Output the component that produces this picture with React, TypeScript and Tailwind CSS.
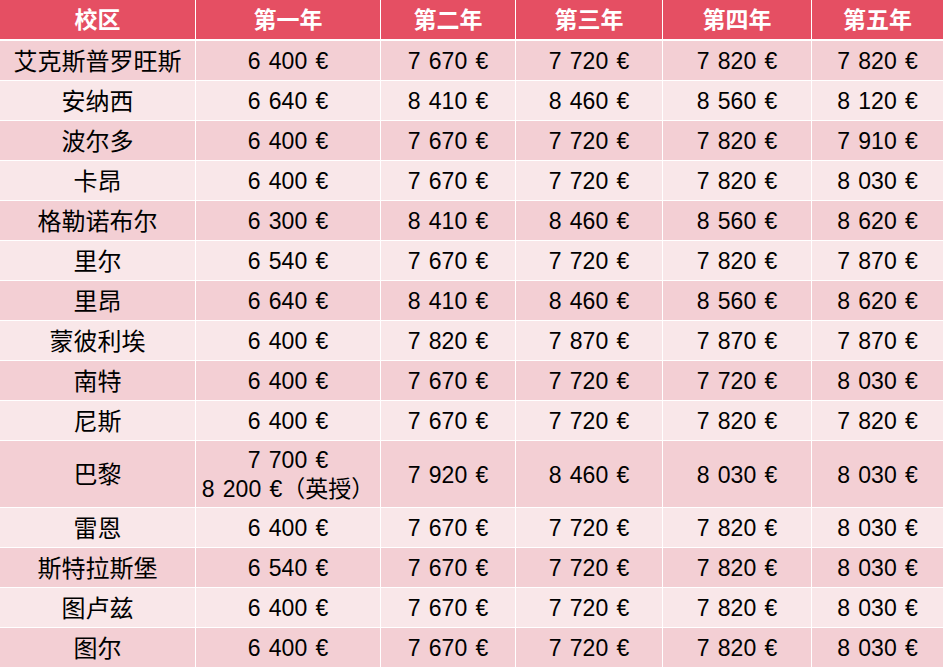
const headers = ['校区', '第一年', '第二年', '第三年', '第四年', '第五年'];

const rows: string[][] = [
  ['艾克斯普罗旺斯', '6 400 €', '7 670 €', '7 720 €', '7 820 €', '7 820 €'],
  ['安纳西', '6 640 €', '8 410 €', '8 460 €', '8 560 €', '8 120 €'],
  ['波尔多', '6 400 €', '7 670 €', '7 720 €', '7 820 €', '7 910 €'],
  ['卡昂', '6 400 €', '7 670 €', '7 720 €', '7 820 €', '8 030 €'],
  ['格勒诺布尔', '6 300 €', '8 410 €', '8 460 €', '8 560 €', '8 620 €'],
  ['里尔', '6 540 €', '7 670 €', '7 720 €', '7 820 €', '7 870 €'],
  ['里昂', '6 640 €', '8 410 €', '8 460 €', '8 560 €', '8 620 €'],
  ['蒙彼利埃', '6 400 €', '7 820 €', '7 870 €', '7 870 €', '7 870 €'],
  ['南特', '6 400 €', '7 670 €', '7 720 €', '7 720 €', '8 030 €'],
  ['尼斯', '6 400 €', '7 670 €', '7 720 €', '7 820 €', '7 820 €'],
  ['巴黎', '7 700 €\n8 200 €（英授）', '7 920 €', '8 460 €', '8 030 €', '8 030 €'],
  ['雷恩', '6 400 €', '7 670 €', '7 720 €', '7 820 €', '8 030 €'],
  ['斯特拉斯堡', '6 540 €', '7 670 €', '7 720 €', '7 820 €', '8 030 €'],
  ['图卢兹', '6 400 €', '7 670 €', '7 720 €', '7 820 €', '8 030 €'],
  ['图尔', '6 400 €', '7 670 €', '7 720 €', '7 820 €', '8 030 €'],
];

const cols = 'grid grid-cols-[195px_184px_134px_146px_148px_1fr] gap-x-px';
const font = { fontFamily: '"Liberation Sans", Arial, "Noto Sans CJK SC", sans-serif' };

export default function App() {
  return (
    <div className="w-[943px] h-[669px] bg-white text-black" style={font}>
      <div className={`${cols} h-[39px]`}>
        {headers.map((h) => (
          <div key={h} className="bg-[#e54f63] flex items-center justify-center text-white font-bold text-[23px] pt-px">
            {h}
          </div>
        ))}
      </div>

      <div className="mt-[2px] flex flex-col gap-y-px">
        {rows.map((r, i) => {
          const bg = i % 2 === 0 ? 'bg-[#f3cfd4]' : 'bg-[#f9e7e9]';
          const tall = r[0] === '巴黎';
          return (
            <div key={r[0]} className={`${cols} ${tall ? 'h-[66px]' : 'h-[39px]'}`}>
              {r.map((c, j) => (
                <div
                  key={j}
                  className={`${bg} flex flex-col items-center justify-center text-center pt-[2px] ${
                    j === 0 ? 'text-[24px]' : 'text-[23px] leading-[29px] [word-spacing:2px]'
                  }`}
                >
                  {c.split('\n').map((line) => (
                    <span key={line}>{line}</span>
                  ))}
                </div>
              ))}
            </div>
          );
        })}
      </div>
    </div>
  );
}
